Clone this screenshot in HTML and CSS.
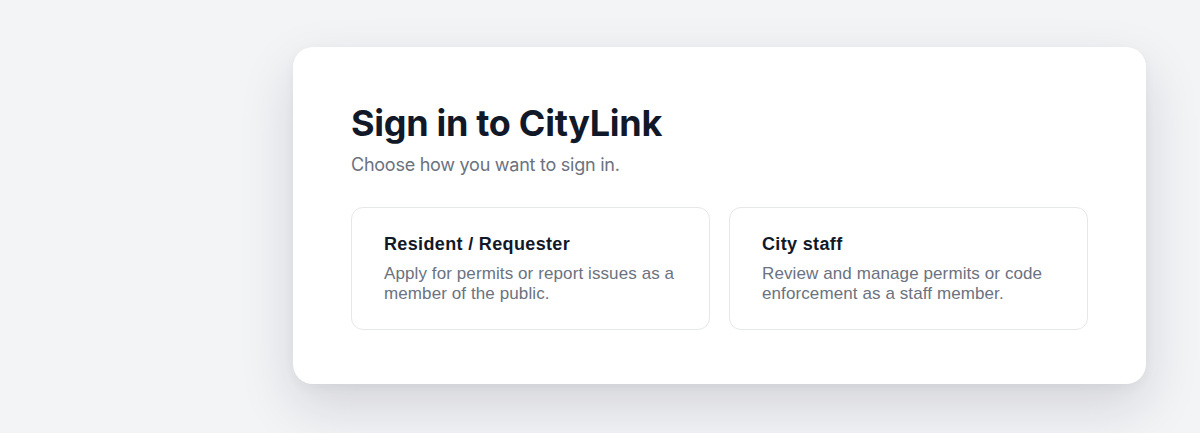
FILE: index.html
```html
<!DOCTYPE html>
<html>
<head>
	<meta charset="utf-8">
	<meta name="viewport" content="width=device-width, initial-scale=1">
	<title>Sign in to CityLink</title>

	<link rel="stylesheet" href="styles.css">

</head>
<body>
	<div class="page">
		<div class="panel">
			<h1 class="title">Sign in to CityLink</h1>
			<p class="sub">Choose how you want to sign in.</p>

			<div class="options">
				<button class="option">
					<span class="opt-title">Resident / Requester</span>
					<span class="opt-text">Apply for permits or report issues as a member of the public.</span>
				</button>
				<button class="option">
					<span class="opt-title">City staff</span>
					<span class="opt-text">Review and manage permits or code enforcement as a staff member.</span>
				</button>
			</div>
		</div>
	</div>
</body>
</html>
```

FILE: styles.css
```css
body {
	margin: 0;
	background: #f3f4f6;
	font-family: Inter, "Liberation Sans", sans-serif;
	height: 433px;
	overflow: hidden;
}

.page {
	padding: 47px 54px 0 293px;
}

.panel {
	background: #fff;
	border-radius: 20px;
	padding: 56px 58px 54px 58px;
	box-shadow: 0 22px 55px rgba(17, 24, 39, 0.14), 0 4px 12px rgba(17, 24, 39, 0.04);
}

.title {
	margin: 0;
	font-size: 36px;
	line-height: 40px;
	font-weight: 700;
	color: #111827;
	letter-spacing: -0.3px;
}

.sub {
	margin: 8px 0 0;
	font-size: 18px;
	line-height: 28px;
	color: #6b7280;
	letter-spacing: -0.25px;
}

.options {
	display: grid;
	grid-template-columns: 1fr 1fr;
	gap: 19px;
	margin-top: 28px;
}

.option {
	display: flex;
	flex-direction: column;
	gap: 8px;
	text-align: left;
	background: #fff;
	border: 1px solid #e5e7eb;
	border-radius: 12px;
	padding: 24px 32px 25px;
	font-family: "Liberation Sans", Arial, sans-serif;
	cursor: pointer;
}

.opt-title {
	font-size: 18px;
	line-height: 24px;
	font-weight: 700;
	color: #111827;
	letter-spacing: 0.35px;
}

.opt-text {
	font-size: 17px;
	line-height: 20px;
	color: #6b7280;
	letter-spacing: 0.1px;
}
```
